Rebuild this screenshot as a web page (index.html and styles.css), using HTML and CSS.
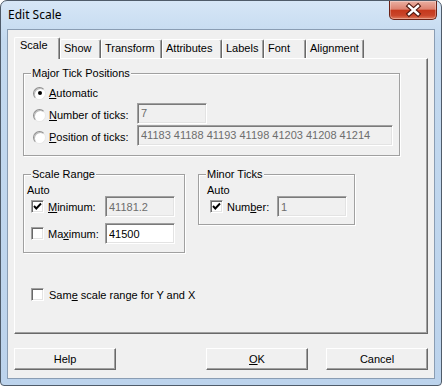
FILE: index.html
```html
<!DOCTYPE html>
<html lang="en">
<head>
  <meta charset="UTF-8" />
  <title>Edit Scale</title>
  <link rel="stylesheet" href="styles.css">
</head>
<body>
  <div class="window">
    <div class="titlebar">
      <span class="title">Edit Scale</span>
      <button class="close" title="Close">
        <svg width="46" height="18" viewBox="0 0 46 18">
          <path d="M19 5 L28 13 M28 5 L19 13" stroke="#4e160d" stroke-width="4.6" stroke-linecap="square" fill="none"/>
          <path d="M19 5 L28 13 M28 5 L19 13" stroke="#fff" stroke-width="2.4" stroke-linecap="square" fill="none"/>
        </svg>
      </button>
    </div>

    <div class="client">
      <div class="tabs">
        <div class="tab active tab-scale">Scale</div>
        <div class="tab tab-show">Show</div>
        <div class="tab tab-transform">Transform</div>
        <div class="tab tab-attributes">Attributes</div>
        <div class="tab tab-labels">Labels</div>
        <div class="tab tab-font">Font</div>
        <div class="tab tab-alignment">Alignment</div>
      </div>

      <div class="panel">
        <div class="group major">
          <span class="group-title">Major Tick Positions</span>
          <div class="opt-row">
            <span class="radio checked"></span>
            <span class="opt-label"><u>A</u>utomatic</span>
          </div>
          <div class="opt-row">
            <span class="radio"></span>
            <span class="opt-label"><u>N</u>umber of ticks:</span>
            <input class="field" type="text" value="7" readonly />
          </div>
          <div class="opt-row">
            <span class="radio"></span>
            <span class="opt-label"><u>P</u>osition of ticks:</span>
            <input class="field wide" type="text" value="41183 41188 41193 41198 41203 41208 41214" readonly />
          </div>
        </div>

        <div class="range-row">
          <div class="group scale-range">
            <span class="group-title">Scale Range</span>
            <div class="auto">Auto</div>
            <div class="check-row">
              <span class="checkbox checked">
                <svg width="11" height="11" viewBox="0 0 11 11"><path d="M2 5 L4.3 7.5 L9 2.5" stroke="#000" stroke-width="1.9" fill="none"/></svg>
              </span>
              <span class="check-label"><u>M</u>inimum:</span>
              <input class="field" type="text" value="41181.2" readonly />
            </div>
            <div class="check-row">
              <span class="checkbox"></span>
              <span class="check-label">Ma<u>x</u>imum:</span>
              <input class="field enabled" type="text" value="41500" />
            </div>
          </div>

          <div class="group minor">
            <span class="group-title">Minor Ticks</span>
            <div class="auto">Auto</div>
            <div class="check-row">
              <span class="checkbox checked">
                <svg width="11" height="11" viewBox="0 0 11 11"><path d="M2 5 L4.3 7.5 L9 2.5" stroke="#000" stroke-width="1.9" fill="none"/></svg>
              </span>
              <span class="check-label">Num<u>b</u>er:</span>
              <input class="field" type="text" value="1" readonly />
            </div>
          </div>
        </div>

        <div class="same-row">
          <span class="checkbox"></span>
          <span class="same-label">Sam<u>e</u> scale range for Y and X</span>
        </div>
      </div>

      <div class="buttons">
        <button class="btn">Help</button>
        <button class="btn btn-ok"><u>O</u>K</button>
        <button class="btn btn-cancel">Cancel</button>
      </div>
    </div>
  </div>
</body>
</html>
```

FILE: styles.css
```css
* {
  box-sizing: border-box;
}

body {
  margin: 0;
  font-family: "Liberation Sans", Arial, sans-serif;
  font-size: 11px;
  color: #000;
  background: #fff;
}

.window {
  width: 442px;
  height: 386px;
  border: 1px solid #4f5b69;
  border-radius: 7px 7px 4px 4px;
  background: linear-gradient(#d6e6f6, #c3d9ef 40px, #bcd3ec);
  padding: 0 6px 6px;
  display: flex;
  flex-direction: column;
}

.titlebar {
  height: 28px;
  display: flex;
  justify-content: space-between;
  align-items: flex-start;
}

.title {
  padding: 6px 0 0 1px;
  font-family: "Noto Sans", sans-serif;
  font-size: 12px;
  line-height: 16px;
}

/* red close button of the title bar */
.close {
  width: 48px;
  height: 19px;
  margin-right: -2px;
  padding: 0;
  border: 1px solid #6b2216;
  border-top: none;
  border-radius: 0 0 5px 5px;
  background: linear-gradient(#eab0a2, #dd8270 45%, #c5381c 52%, #c9452a 80%, #e07a5c);
  box-shadow: inset 0 0 0 1px rgba(255,255,255,0.3);
  display: flex;
  align-items: center;
  justify-content: center;
}

.client {
  flex: 1;
  background: #f0f0f0;
  border: 1px solid #8a9db3;
  padding: 7px 6px 8px;
  display: flex;
  flex-direction: column;
}

/* Tab strip */
.tabs {
  display: flex;
  align-items: flex-end;
  height: 21px;
  position: relative;
  z-index: 1;
}

.tab {
  height: 19px;
  border: 1px solid #fff;
  border-bottom: none;
  border-right-color: #696969;
  border-radius: 2px 2px 0 0;
  box-shadow: inset -1px 0 0 #a0a0a0;
  padding-left: 3px;
  line-height: 17px;
  background: #f0f0f0;
  white-space: nowrap;
}

.tab.active {
  height: 22px;
  margin-bottom: -1px;
  padding-left: 5px;
  line-height: 15px;
}

.tab-scale { width: 46px; }
.tab-show { width: 41px; }
.tab-transform { width: 61px; }
.tab-attributes { width: 60px; }
.tab-labels { width: 42px; }
.tab-font { width: 42px; }
.tab-alignment { width: 58px; }

.panel {
  height: 276px;
  border: 1px solid;
  border-color: #fff #696969 #696969 #fff;
  box-shadow: inset -1px -1px 0 #a0a0a0;
  padding: 14px 0 0 8px;
}

/* Group boxes */
.group {
  position: relative;
  border: 1px solid #a0a0a0;
  box-shadow: 1px 1px 0 #fff, inset 1px 1px 0 #fff;
}

.group-title {
  position: absolute;
  top: -7px;
  left: 7px;
  padding: 0 1px;
  line-height: 13px;
  background: #f0f0f0;
}

.major {
  width: 377px;
  padding: 8px 0 7px 9px;
}

.opt-row {
  display: flex;
  align-items: center;
  height: 22px;
}

.opt-label {
  width: 88px;
  margin-left: 3px;
  white-space: nowrap;
}

.radio {
  width: 13px;
  height: 13px;
  border-radius: 50%;
  background: #fff;
  border: 1px solid;
  border-color: #8d8d8d #e8e8e8 #e8e8e8 #8d8d8d;
  box-shadow: inset 1px 1px 0 #bdbdbd;
  display: flex;
  align-items: center;
  justify-content: center;
}

.radio.checked::after {
  content: "";
  width: 4px;
  height: 4px;
  border-radius: 50%;
  background: #000;
}

.field {
  width: 70px;
  height: 21px;
  margin-top: -4px;
  padding: 0 0 0 3px;
  font: inherit;
  color: #6d6d6d;
  background: #f0f0f0;
  border: 1px solid;
  border-color: #a0a0a0 #fff #fff #a0a0a0;
  box-shadow: inset 1px 1px 0 #7a7a7a, inset -1px -1px 0 #e3e3e3;
  outline: none;
}

.field.wide {
  width: 256px;
}

.field.enabled {
  color: #000;
  background: #fff;
}

.range-row {
  display: flex;
  align-items: flex-start;
  margin-top: 18px;
}

.scale-range {
  width: 162px;
  padding: 9px 0 8px 3px;
}

.minor {
  width: 157px;
  margin-left: 13px;
  padding: 9px 0 7px 8px;
}

.auto {
  height: 12px;
  line-height: 12px;
}

.check-row {
  display: flex;
  align-items: center;
  height: 21px;
  padding-left: 4px;
}

.check-row .field {
  margin-top: 0;
}

.check-row + .check-row {
  margin-top: 6px;
}

.minor .check-row {
  padding-left: 3px;
}

.checkbox {
  width: 13px;
  height: 13px;
  flex: none;
  background: #fff;
  border: 1px solid;
  border-color: #a0a0a0 #fff #fff #a0a0a0;
  box-shadow: inset 1px 1px 0 #696969, inset -1px -1px 0 #e3e3e3;
  display: flex;
  align-items: center;
  justify-content: center;
}

.check-label {
  width: 57px;
  margin-left: 4px;
  white-space: nowrap;
}

.minor .check-label {
  width: 50px;
}

.same-row {
  display: flex;
  align-items: center;
  height: 13px;
  margin: 35px 0 0 8px;
}

.same-label {
  margin-left: 5px;
}

/* Dialog buttons */
.buttons {
  display: flex;
  margin-top: 14px;
  height: 22px;
}

.btn {
  width: 102px;
  height: 22px;
  padding: 0;
  font: inherit;
  color: #000;
  background: #f0f0f0;
  border: 1px solid;
  border-color: #fff #696969 #696969 #fff;
  box-shadow: inset -1px -1px 0 #a0a0a0;
}

.btn-ok {
  margin-left: auto;
}

.btn-cancel {
  margin-left: 18px;
}
```
